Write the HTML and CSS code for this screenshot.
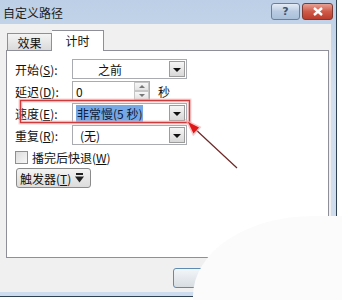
FILE: index.html
```html
<!DOCTYPE html>
<html lang="zh-CN">
<head>
    <meta charset="UTF-8">
    <title>自定义路径</title>
    <link rel="stylesheet" href="styles.css">
</head>
<body>
    <div class="window">
        <div class="titlebar">
            <span class="title">自定义路径</span>
            <div class="caption-btns">
                <span class="cbtn help">?</span>
                <span class="cbtn close">
                    <svg width="12" height="9" viewBox="0 0 12 9"><path d="M2 1 L10 8 M10 1 L2 8" stroke="#fff" stroke-width="2.4"/></svg>
                </span>
            </div>
        </div>
        <div class="client">
            <div class="tabs">
                <span class="tab">效果</span>
                <span class="tab active">计时</span>
            </div>
            <div class="panel">
                <div class="row">
                    <span class="label">开始(<u>S</u>):</span>
                    <div class="combo">
                        <span class="value center">之前</span>
                        <span class="drop"><i class="tri"></i></span>
                    </div>
                </div>
                <div class="row">
                    <span class="label">延迟(<u>D</u>):</span>
                    <div class="spin">
                        <span class="value">0</span>
                        <span class="spin-btns">
                            <span class="up"><i class="tri-up"></i></span>
                            <span class="down"><i class="tri-small"></i></span>
                        </span>
                    </div>
                    <span class="unit">秒</span>
                </div>
                <div class="row">
                    <span class="label">速度(<u>E</u>):</span>
                    <div class="combo">
                        <span class="value"><span class="sel">非常慢(5 秒)</span></span>
                        <span class="drop"><i class="tri"></i></span>
                    </div>
                </div>
                <div class="row">
                    <span class="label">重复(<u>R</u>):</span>
                    <div class="combo">
                        <span class="value pad">(无)</span>
                        <span class="drop"><i class="tri"></i></span>
                    </div>
                </div>
                <div class="row check-row">
                    <span class="checkbox"></span>
                    <span>播完后快退(<u>W</u>)</span>
                </div>
                <div class="trigger">
                    <span>触发器(<u>T</u>)</span>
                    <svg width="9" height="10" viewBox="0 0 9 10"><rect x="1" y="0" width="7" height="2" fill="#222"/><path d="M0 3.5 H9 L4.5 9.5 Z" fill="#222"/></svg>
                </div>
            </div>
            <div class="footer">
                <span class="btn">确定</span>
                <span class="btn">取消</span>
            </div>
        </div>
    </div>

    <div class="curl"></div>

    <svg class="mark" width="342" height="300" viewBox="0 0 342 300">
        <rect x="20.5" y="100.5" width="169" height="22" fill="none" stroke="#f2b6b6" stroke-width="4" opacity="0.6"/>
        <rect x="20.5" y="100.5" width="169" height="22" fill="none" stroke="#cf3b3b" stroke-width="1.4"/>
        <line x1="237" y1="168" x2="194" y2="128" stroke="#6e2626" stroke-width="1.2"/>
        <path d="M188 122 L199 127.5 L193.5 133.5 Z" fill="#f07a7a" stroke="#f5b0b0" stroke-width="3" opacity="0.7"/>
        <path d="M188 122 L199 127.5 L193.5 133.5 Z" fill="#e01818"/>
    </svg>
</body>
</html>
```

FILE: styles.css
```css
body {
    margin: 0;
    width: 342px;
    height: 300px;
    overflow: hidden;
    position: relative;
    background: #ffffff;
    font-family: "Noto Sans CJK SC", "Noto Sans", sans-serif;
    font-size: 12px;
    color: #111;
}

.window {
    width: 336px;
    height: 296px;
    border-right: 1px solid #2f4254;
    border-bottom: 1px solid #2f4254;
    background: linear-gradient(#bccfe6, #d2dfee 30%, #cddcee);
    display: flex;
    flex-direction: column;
}

.titlebar {
    height: 24px;
    display: flex;
    align-items: center;
    justify-content: space-between;
    padding-left: 3px;
}

.title {
    font-size: 12px;
    color: #1e1e1e;
}

.caption-btns {
    display: flex;
    gap: 2px;
    margin-right: 3px;
    margin-top: -1px;
}

.cbtn {
    height: 15px;
    display: flex;
    align-items: center;
    justify-content: center;
    border: 1px solid #6d7f96;
    border-radius: 3px;
}

.help {
    width: 27px;
    background: linear-gradient(#e4ecf6, #b9cbe2 50%, #a9bfd9);
    color: #3f5470;
    font-family: "DejaVu Sans", sans-serif;
    font-weight: bold;
    font-size: 11px;
}

.close {
    width: 29px;
    border-color: #7c3a33;
    background: linear-gradient(#e6a195, #cf5a49 50%, #bb3c2c);
}

.client {
    flex: 1;
    margin-right: 5px;
    margin-bottom: 4px;
    background: #f0f0f0;
    padding: 6px 2px 0 6px;
    display: flex;
    flex-direction: column;
}

.tabs {
    display: flex;
    align-items: flex-end;
    height: 20px;
    padding-left: 1px;
}

.tab {
    width: 45px;
    height: 17px;
    line-height: 17px;
    text-align: center;
    border: 1px solid #8d9099;
    border-bottom: none;
    background: linear-gradient(#f4f4f4, #dadada);
    box-sizing: border-box;
}

.tab.active {
    width: 52px;
    height: 21px;
    line-height: 19px;
    background: #fff;
    margin-bottom: -1px;
    border-left: none;
    position: relative;
    z-index: 1;
}

.panel {
    height: 208px;
    box-sizing: border-box;
    border: 1px solid #8d9099;
    background: #fff;
    padding: 7px 0 0 8px;
}

.row {
    display: flex;
    align-items: center;
    height: 22px;
}

.label {
    width: 57px;
}

.combo,
.spin {
    height: 20px;
    box-sizing: border-box;
    border: 1px solid #a9abb2;
    display: flex;
    align-items: center;
    justify-content: space-between;
    background: #fff;
}

.combo {
    width: 115px;
}

.spin {
    width: 78px;
}

.value {
    padding-left: 3px;
}

.value.center {
    padding-left: 25px;
}

.value.pad {
    padding-left: 7px;
}

.sel {
    background: #76a8e6;
    color: #0c1a38;
    padding: 0 1px;
}

.drop {
    width: 14px;
    height: 14px;
    margin-right: 1px;
    border: 1px solid #9c9c9c;
    background: linear-gradient(#f6f6f6, #d8d8d8);
    display: flex;
    align-items: center;
    justify-content: center;
}

.tri {
    width: 0;
    height: 0;
    border-left: 4px solid transparent;
    border-right: 4px solid transparent;
    border-top: 4px solid #111;
    margin-top: 2px;
}

.spin-btns {
    width: 15px;
    height: 18px;
    display: flex;
    flex-direction: column;
}

.spin-btns span {
    flex: 1;
    border: 1px solid #c6c6c6;
    background: linear-gradient(#f7f7f7, #e3e3e3);
    display: flex;
    align-items: center;
    justify-content: center;
}

.tri-up {
    width: 0;
    height: 0;
    border-left: 3px solid transparent;
    border-right: 3px solid transparent;
    border-bottom: 3px solid #777;
}

.tri-small {
    width: 0;
    height: 0;
    border-left: 3px solid transparent;
    border-right: 3px solid transparent;
    border-top: 3px solid #777;
}

.unit {
    margin-left: 8px;
}

.check-row {
    gap: 4px;
}

.checkbox {
    width: 11px;
    height: 11px;
    border: 1px solid #8f8f8f;
    background: linear-gradient(135deg, #dcdcdc, #f7f7f7);
}

.trigger {
    margin-left: 1px;
    width: 75px;
    height: 20px;
    box-sizing: border-box;
    border: 1px solid #8b8b8b;
    border-radius: 3px;
    background: linear-gradient(#f3f3f3, #dcdcdc);
    display: flex;
    align-items: center;
    gap: 4px;
    padding-left: 3px;
}

.footer {
    display: flex;
    justify-content: flex-end;
    gap: 6px;
    padding-top: 10px;
}

.btn {
    width: 75px;
    height: 20px;
    box-sizing: border-box;
    border: 1px solid #5f8bb3;
    border-radius: 3px;
    background: linear-gradient(#f2f6f9, #d8dde2);
    display: flex;
    align-items: center;
    justify-content: center;
}

.curl {
    position: absolute;
    left: 193px;
    top: 216px;
    width: 149px;
    height: 84px;
    background: #fbfbfb;
    border-top-left-radius: 120px 80px;
}

.mark {
    position: absolute;
    left: 0;
    top: 0;
    pointer-events: none;
}
```
